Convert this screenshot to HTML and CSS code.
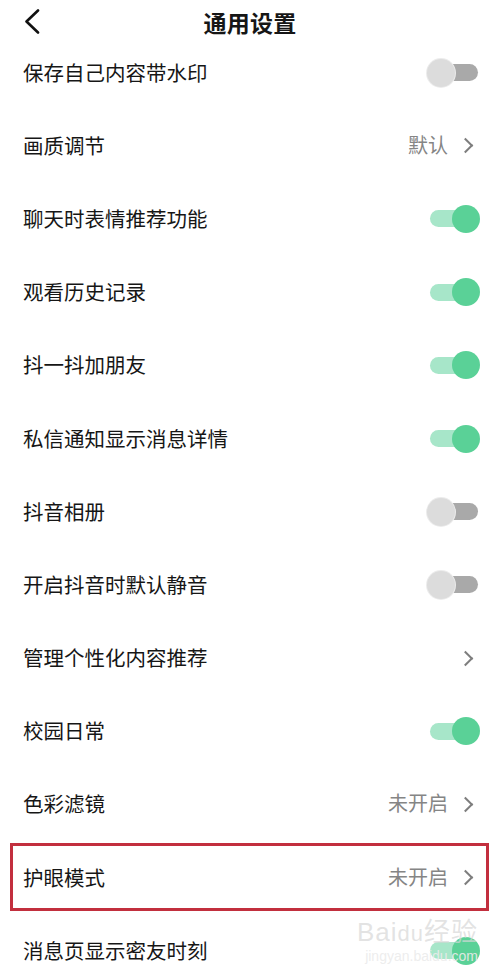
FILE: index.html
```html
<!DOCTYPE html>
<html lang="zh-CN">
<head>
    <meta charset="UTF-8">
    <title>通用设置</title>
    <link rel="stylesheet" href="styles.css">
</head>
<body>
<div class="page">
    <div class="topBar">
        <svg class="backIcon" width="16" height="25" viewBox="0 0 16 25">
            <polyline points="14,1.5 2.5,12.5 14,23.5" fill="none" stroke="#111" stroke-width="2.6" stroke-linecap="round" stroke-linejoin="round"/>
        </svg>
        <h1 class="title">通用设置</h1>
    </div>
    <ul class="setList">
        <li><span class="label">保存自己内容带水印</span><span class="switch"></span></li>
        <li><span class="label">画质调节</span><span class="value">默认</span><i class="arrow"></i></li>
        <li><span class="label">聊天时表情推荐功能</span><span class="switch on"></span></li>
        <li><span class="label">观看历史记录</span><span class="switch on"></span></li>
        <li><span class="label">抖一抖加朋友</span><span class="switch on"></span></li>
        <li><span class="label">私信通知显示消息详情</span><span class="switch on"></span></li>
        <li><span class="label">抖音相册</span><span class="switch"></span></li>
        <li><span class="label">开启抖音时默认静音</span><span class="switch"></span></li>
        <li><span class="label">管理个性化内容推荐</span><span class="value"></span><i class="arrow"></i></li>
        <li><span class="label">校园日常</span><span class="switch on"></span></li>
        <li><span class="label">色彩滤镜</span><span class="value">未开启</span><i class="arrow"></i></li>
        <li class="marked"><span class="label">护眼模式</span><span class="value">未开启</span><i class="arrow"></i></li>
        <li><span class="label">消息页显示密友时刻</span><span class="switch on"></span></li>
    </ul>
    <div class="watermark">
        <div class="wmTop">Bai<span class="wmDu">du</span>经验</div>
        <div class="wmUrl">jingyan.baidu.com</div>
    </div>
</div>
</body>
</html>
```

FILE: styles.css
```css
* {
    margin: 0;
    padding: 0;
}

ul {
    list-style: none;
}

html, body {
    background-color: #fff;
}

.page {
    width: 500px;
    height: 972px;
    overflow: hidden;
    position: relative;
    font-family: "Noto Sans CJK SC", "Noto Sans", sans-serif;
    color: #161616;
}

.topBar {
    height: 36px;
    display: flex;
    align-items: flex-start;
    justify-content: center;
    position: relative;
}

.backIcon {
    position: absolute;
    left: 24px;
    top: 9px;
}

.title {
    font-size: 23px;
    font-weight: 700;
    line-height: 26px;
    padding-top: 9px;
    letter-spacing: 0.3px;
}

.setList li {
    height: 73.2px;
    display: flex;
    align-items: center;
    padding: 0 22px 0 23px;
    position: relative;
}

.label {
    flex: 1;
    font-size: 20.5px;
    line-height: 26px;
    margin-top: -2px;
}

.value {
    font-size: 20px;
    color: #858585;
    line-height: 26px;
    margin-top: -2px;
    margin-right: 12px;
}

.arrow {
    width: 9px;
    height: 9px;
    border-top: 2px solid #7e7e7e;
    border-right: 2px solid #7e7e7e;
    transform: rotate(45deg);
    margin-right: 7px;
}

.switch {
    width: 48px;
    height: 17px;
    border-radius: 9px;
    background-color: #a9a9a9;
    position: relative;
}

.switch::after {
    content: "";
    width: 28px;
    height: 28px;
    border-radius: 50%;
    background-color: #dcdcdc;
    box-shadow: 0 0 0 1px #ececec;
    position: absolute;
    top: -5.5px;
    left: -3px;
}

.switch.on {
    background-color: #a7e6c9;
}

.switch.on::after {
    background-color: #5ad197;
    box-shadow: none;
    left: auto;
    right: -2px;
}

.marked::before {
    content: "";
    position: absolute;
    left: 10px;
    right: 11px;
    top: 2px;
    bottom: 3px;
    border: 3px solid #c22f3e;
}

.watermark {
    position: absolute;
    right: 22px;
    bottom: 8px;
    color: rgba(215, 215, 215, 0.7);
    text-align: right;
    font-family: "Liberation Sans", "Noto Sans CJK SC", sans-serif;
}

.wmTop {
    font-size: 26px;
    line-height: 28px;
    letter-spacing: 1px;
}

.wmDu {
    font-size: 22px;
}

.wmUrl {
    font-size: 14px;
    line-height: 16px;
    color: rgba(235, 235, 235, 0.9);
}
```
